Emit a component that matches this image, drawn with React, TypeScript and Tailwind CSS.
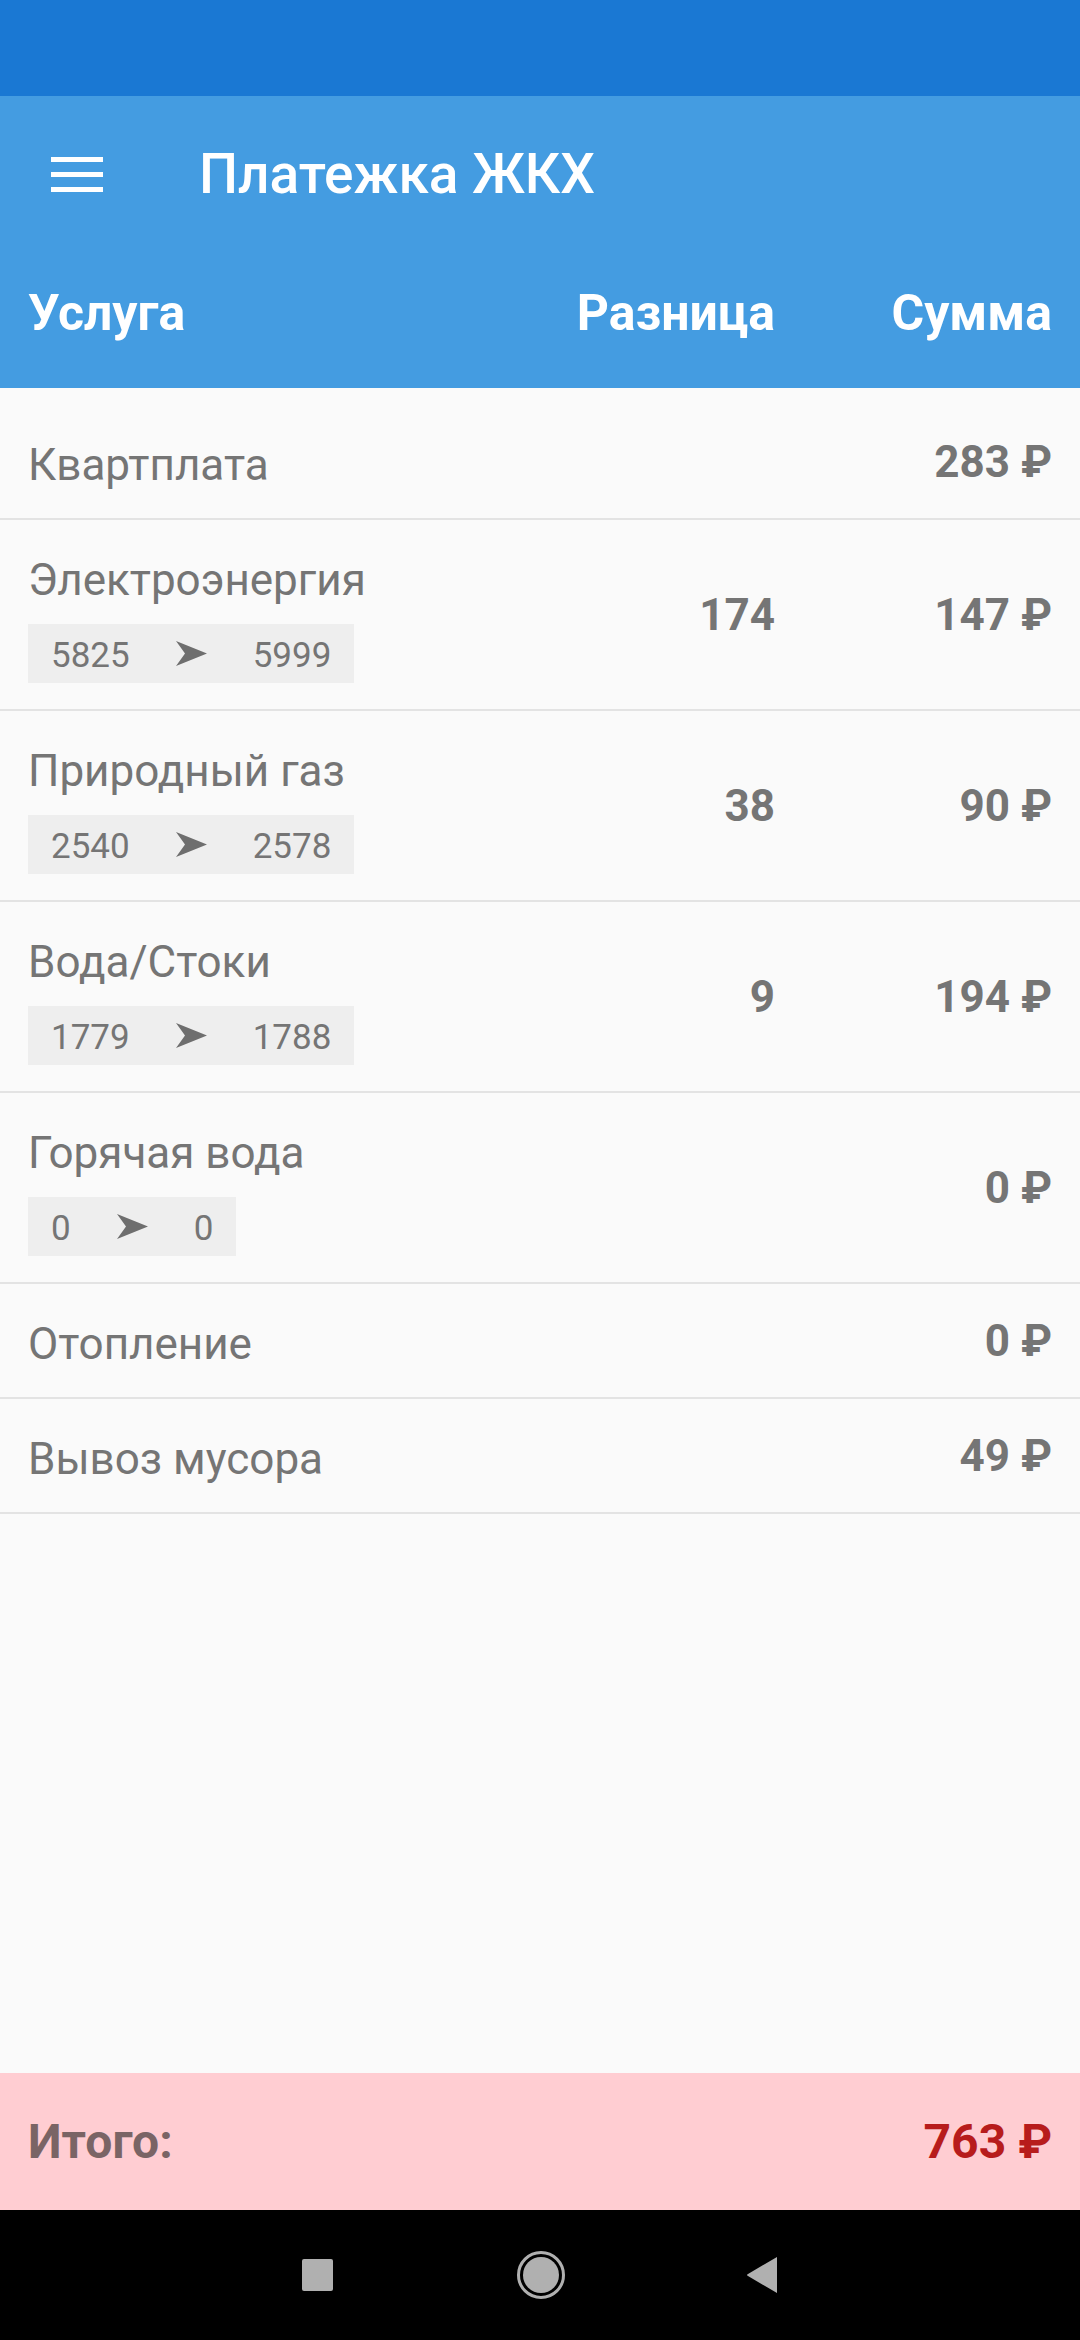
import React from "react";

type Row = {
  name: string;
  sum: number;
  diff?: number;
  meter?: [number, number];
};

const rows: Row[] = [
  { name: "Квартплата", sum: 283 },
  { name: "Электроэнергия", sum: 147, diff: 174, meter: [5825, 5999] },
  { name: "Природный газ", sum: 90, diff: 38, meter: [2540, 2578] },
  { name: "Вода/Стоки", sum: 194, diff: 9, meter: [1779, 1788] },
  { name: "Горячая вода", sum: 0, meter: [0, 0] },
  { name: "Отопление", sum: 0 },
  { name: "Вывоз мусора", sum: 49 },
];

function Arrow() {
  return (
    <svg width="31" height="25" viewBox="0 0 31 25" className="shrink-0">
      <path d="M0 0 L31 12.5 L0 25 L9 12.5 Z" fill="#6e6e6e" />
    </svg>
  );
}

function MeterBox({ from, to }: { from: number; to: number }) {
  return (
    <div className="mt-[18px] flex h-[59px] w-fit items-center gap-[46px] bg-[#eeeeee] px-[23px] text-[35px] leading-none text-[#757575]">
      <span className="pt-[3px]">{from}</span>
      <Arrow />
      <span className="pt-[3px]">{to}</span>
    </div>
  );
}

function ServiceRow({ row }: { row: Row }) {
  return (
    <div className="flex items-center border-b-2 border-[#e3e3e3] px-[28px] text-[#757575]">
      <div className={row.meter ? "flex-1 pt-[35px] pb-[26px]" : "flex-1 pt-[35px] pb-[27px]"}>
        <p className="text-[44px] leading-[51px]">{row.name}</p>
        {row.meter && <MeterBox from={row.meter[0]} to={row.meter[1]} />}
      </div>
      <div className="w-[200px] text-right text-[44px] font-bold">{row.diff ?? ""}</div>
      <div className="w-[277px] text-right text-[44px] font-bold">{row.sum} ₽</div>
    </div>
  );
}

export default function App() {
  return (
    <div className="flex h-[2340px] w-[1080px] flex-col bg-[#fafafa] font-['Roboto',sans-serif]">
      <div className="h-[96px] shrink-0 bg-[#1a78d3]" />

      <header className="shrink-0 bg-[#449ce1] text-white">
        <div className="flex h-[147px] items-center pt-[10px]">
          <div className="ml-[51px] flex w-[52px] flex-col gap-[10px]">
            <span className="h-[5px] bg-white" />
            <span className="h-[5px] bg-white" />
            <span className="h-[5px] bg-white" />
          </div>
          <h1 className="ml-[96px] text-[55px] font-medium">Платежка ЖКХ</h1>
        </div>
        <div className="flex h-[145px] items-center px-[28px] pb-[4px] text-[50px] font-bold">
          <span className="flex-1">Услуга</span>
          <span className="w-[200px] text-right">Разница</span>
          <span className="w-[277px] text-right">Сумма</span>
        </div>
      </header>

      <main className="flex-1 pt-[17px]">
        {rows.map((r) => (
          <ServiceRow key={r.name} row={r} />
        ))}
      </main>

      <footer className="flex h-[137px] shrink-0 items-center justify-between bg-[#ffcdd2] px-[28px] text-[48px] font-bold">
        <span className="text-[#7a6465]">Итого:</span>
        <span className="text-[#b71c1c]">763 ₽</span>
      </footer>

      <nav className="flex h-[130px] shrink-0 items-center justify-center bg-black">
        <span className="h-[32px] w-[31px] rounded-[2px] bg-[#b0b0b0]" />
        <span className="ml-[184px] flex h-[48px] w-[48px] items-center justify-center rounded-full border-[3px] border-[#b0b0b0]">
          <span className="h-[36px] w-[36px] rounded-full bg-[#b0b0b0]" />
        </span>
        <svg className="ml-[181px]" width="32" height="38" viewBox="0 0 32 38">
          <path d="M31 1 L31 37 L2 20 Q0 19 2 18 Z" fill="#b0b0b0" />
        </svg>
      </nav>
    </div>
  );
}
